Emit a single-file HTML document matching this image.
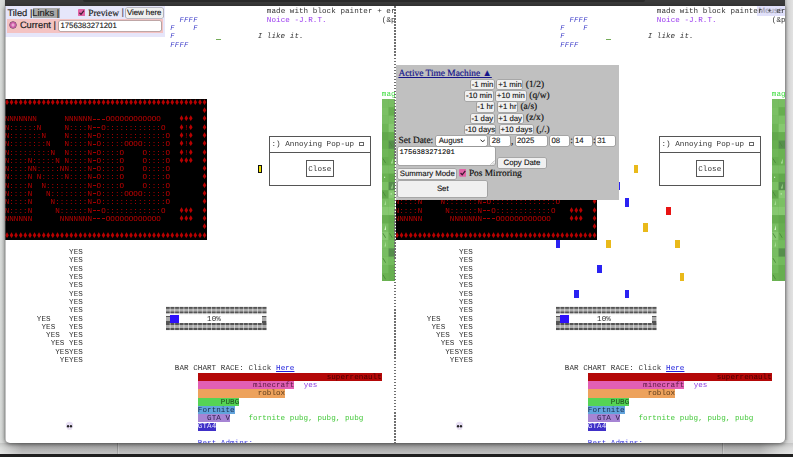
<!DOCTYPE html>
<html><head><meta charset="utf-8"><title>tiled</title>
<style>
html,body{margin:0;padding:0}
body{text-rendering:geometricPrecision;width:793px;height:457px;overflow:hidden;position:relative;background:#dcdedc;font-family:"Liberation Sans",sans-serif}
#top{position:absolute;left:5px;top:0;width:780px;height:6px;background:#3a3a3a}
#lstrip{position:absolute;left:0;top:0;width:6px;height:454px;background:linear-gradient(to right,#d9dcda 0,#d3d6d4 60%,#b4b6b4 100%)}
#rstrip{position:absolute;left:785px;top:0;width:8px;height:454px;background:linear-gradient(to right,#b4b4b4 0,#d4d4d4 35%,#e2e2e2 100%)}
#under{position:absolute;left:0;top:440px;width:793px;height:14px;background:linear-gradient(to right,#dcdedc 0,#cfd0cf 6px,#adadad 22px,#a9a9a9 50%,#adadad 760px,#cfd0cf 780px,#dddddd 100%)}
#under i{position:absolute;top:0;width:1px;height:14px;background:#8c8c8c;box-shadow:1px 0 0 rgba(255,255,255,.18)}
#under:after{content:'';position:absolute;left:0;top:3px;width:793px;height:11px;background:linear-gradient(to bottom,rgba(0,0,0,.10) 0,rgba(0,0,0,0) 45%,rgba(255,255,255,.28) 100%)}
#bot{position:absolute;left:0;top:453.5px;width:793px;height:4px;background:#1f1f1f}
#win{position:absolute;left:5px;top:6px;width:780px;height:437px;background:#fff;border-radius:0 0 5px 5px;overflow:hidden;box-shadow:0 1px 4px rgba(0,0,0,.55)}
.tile{position:absolute;top:0;height:437px;overflow:hidden;will-change:transform}
.t{position:absolute;white-space:pre;font:7.6px/8.3px "Liberation Mono",monospace;letter-spacing:0.0392px}
.b{position:absolute}
.s{position:absolute;white-space:pre;-webkit-text-stroke:.18px currentColor}
.btn{position:absolute;box-sizing:border-box;background:#f0f0f0;box-shadow:0 0 0 .6px #8e8e8e;border-radius:1.2px;font:7.8px "Liberation Sans",sans-serif;color:#111;text-align:center;white-space:pre;-webkit-text-stroke:.12px currentColor}
.inp{position:absolute;box-sizing:border-box;background:#fff;box-shadow:0 0 0 .6px #8a8a8a;border-radius:1.4px;font:7.8px "Liberation Sans",sans-serif;color:#111;text-align:left;white-space:pre;overflow:hidden;padding-left:1.4px;-webkit-text-stroke:.1px currentColor}
.ta{font:7.1px/8px "Liberation Mono",monospace;padding:2.2px 0 0 1.1px;color:#000}
#div{position:absolute;left:389.4px;top:0;width:1.4px;height:437px;background:repeating-linear-gradient(to bottom,#6e6e6e 0,#6e6e6e 1.5px,rgba(255,255,255,0) 1.5px,rgba(255,255,255,0) 3.03px)}
</style></head><body>
<div id="lstrip"></div><div id="rstrip"></div>
<div id="under"><i style="left:117px"></i><i style="left:722px"></i></div>
<div id="top"><div style="position:absolute;left:78px;top:0;width:562px;height:1.6px;background:#2a2a2a;border-radius:0 0 3px 3px"></div></div>
<div id="bot"></div>
<div id="win">
<div class="b" style="left:752px;top:0;width:28px;height:9.5px;background:#e1e1fb"></div>
<div class="s" style="left:753.5px;top:-1.4px;line-height:12px;font-size:8px;font-family:'Liberation Sans';color:#a2a2b2;">Mouse</div>
<div class="tile" style="left:0;width:389.7px">
<div class="t" style="left:261.85px;top:2.4px;color:#333;">made with block painter + eraser</div>
<div class="t" style="left:174.45px;top:10.7px;color:#3a3ac8;font-style:italic;font-size:7.2px;letter-spacing:0.279px">FFFF</div>
<div class="t" style="left:261.85px;top:10.7px;color:#9a3af0;">Noice -J.R.T.</div>
<div class="t" style="left:376.85px;top:10.7px;color:#333;">(&amp;pls</div>
<div class="t" style="left:165.25px;top:19.0px;color:#3a3ac8;font-style:italic;font-size:7.2px;letter-spacing:0.279px">F    F</div>
<div class="t" style="left:165.25px;top:27.3px;color:#3a3ac8;font-style:italic;font-size:7.2px;letter-spacing:0.279px">F</div>
<div class="b" style="left:211.25px;top:26.4px;width:4.6px;height:8.3px;background:none;"></div>
<div class="b" style="left:211.45px;top:32.8px;width:4.2px;height:1.2px;background:#74ac58"></div>
<div class="t" style="left:252.65px;top:27.3px;color:#333;font-style:italic">I like it.</div>
<div class="t" style="left:165.25px;top:35.6px;color:#3a3ac8;font-style:italic;font-size:7.2px;letter-spacing:0.279px">FFFF</div>
<div class="b" style="left:-0.35px;top:92.8px;width:202.4px;height:141.1px;background:#000;"></div>
<div class="t" style="left:-0.35px;top:93.7px;color:#bc0000;"></div>
<div class="t" style="left:-0.35px;top:93.7px;color:#b60000;transform:translateY(0.2px) scaleY(1.28);transform-origin:50% 50%">♦♦♦♦♦♦♦♦♦♦♦♦♦♦♦♦♦♦♦♦♦♦♦♦♦♦♦♦♦♦♦♦♦♦♦♦♦♦♦♦♦♦♦♦</div>
<div class="t" style="left:-0.35px;top:102.0px;color:#bc0000;"></div>
<div class="t" style="left:-0.35px;top:102.0px;color:#b60000;transform:translateY(0.2px) scaleY(1.28);transform-origin:50% 50%">                                           ♦</div>
<div class="t" style="left:-0.35px;top:110.3px;color:#bc0000;">NNNNNNN      NNNNNN   OOOOOOOOOOOO</div>
<div class="b" style="left:87.85px;top:112.6px;width:3px;height:1px;background:#a40000"></div>
<div class="b" style="left:92.45px;top:112.6px;width:3px;height:1px;background:#a40000"></div>
<div class="b" style="left:97.05px;top:112.6px;width:3px;height:1px;background:#a40000"></div>
<div class="t" style="left:-0.35px;top:110.3px;color:#b60000;transform:translateY(0.2px) scaleY(1.28);transform-origin:50% 50%">                                      ♦♦♦  ♦</div>
<div class="t" style="left:-0.35px;top:118.6px;color:#bc0000;">N::::::N     N::::N  O::::::::::::O    !</div>
<div class="b" style="left:87.85px;top:120.9px;width:3px;height:1px;background:#a40000"></div>
<div class="b" style="left:92.45px;top:120.9px;width:3px;height:1px;background:#a40000"></div>
<div class="t" style="left:-0.35px;top:118.6px;color:#b60000;transform:translateY(0.2px) scaleY(1.28);transform-origin:50% 50%">                                      ♦ ♦  ♦</div>
<div class="t" style="left:-0.35px;top:126.9px;color:#bc0000;">N:::::::N    N::::N O::::::::::::::O   !</div>
<div class="b" style="left:87.85px;top:129.2px;width:3px;height:1px;background:#a40000"></div>
<div class="t" style="left:-0.35px;top:126.9px;color:#b60000;transform:translateY(0.2px) scaleY(1.28);transform-origin:50% 50%">                                      ♦ ♦  ♦</div>
<div class="t" style="left:-0.35px;top:135.2px;color:#bc0000;">N::::::::N   N::::N O:::::OOOO:::::O   !</div>
<div class="b" style="left:87.85px;top:137.5px;width:3px;height:1px;background:#a40000"></div>
<div class="t" style="left:-0.35px;top:135.2px;color:#b60000;transform:translateY(0.2px) scaleY(1.28);transform-origin:50% 50%">                                      ♦ ♦  ♦</div>
<div class="t" style="left:-0.35px;top:143.5px;color:#bc0000;">N:::::::::N  N::::N O::::O    O::::O   !</div>
<div class="b" style="left:87.85px;top:145.8px;width:3px;height:1px;background:#a40000"></div>
<div class="t" style="left:-0.35px;top:143.5px;color:#b60000;transform:translateY(0.2px) scaleY(1.28);transform-origin:50% 50%">                                      ♦ ♦  ♦</div>
<div class="t" style="left:-0.35px;top:151.8px;color:#bc0000;">N::::N:::::N N::::N O::::O    O::::O</div>
<div class="b" style="left:87.85px;top:154.1px;width:3px;height:1px;background:#a40000"></div>
<div class="t" style="left:-0.35px;top:151.8px;color:#b60000;transform:translateY(0.2px) scaleY(1.28);transform-origin:50% 50%">                                      ♦♦♦  ♦</div>
<div class="t" style="left:-0.35px;top:160.1px;color:#bc0000;">N::::NN:::::NN::::N O::::O    O::::O</div>
<div class="b" style="left:87.85px;top:162.4px;width:3px;height:1px;background:#a40000"></div>
<div class="t" style="left:-0.35px;top:160.1px;color:#b60000;transform:translateY(0.2px) scaleY(1.28);transform-origin:50% 50%">                                           ♦</div>
<div class="t" style="left:-0.35px;top:168.4px;color:#bc0000;">N::::N N:::::N::::N O::::O    O::::O</div>
<div class="b" style="left:87.85px;top:170.7px;width:3px;height:1px;background:#a40000"></div>
<div class="t" style="left:-0.35px;top:168.4px;color:#b60000;transform:translateY(0.2px) scaleY(1.28);transform-origin:50% 50%">                                           ♦</div>
<div class="t" style="left:-0.35px;top:176.7px;color:#bc0000;">N::::N  N:::::::::N O::::O    O::::O</div>
<div class="b" style="left:87.85px;top:179.0px;width:3px;height:1px;background:#a40000"></div>
<div class="t" style="left:-0.35px;top:176.7px;color:#b60000;transform:translateY(0.2px) scaleY(1.28);transform-origin:50% 50%">                                           ♦</div>
<div class="t" style="left:-0.35px;top:185.0px;color:#bc0000;">N::::N   N::::::::N O:::::OOOO:::::O</div>
<div class="b" style="left:87.85px;top:187.3px;width:3px;height:1px;background:#a40000"></div>
<div class="t" style="left:-0.35px;top:185.0px;color:#b60000;transform:translateY(0.2px) scaleY(1.28);transform-origin:50% 50%">                                           ♦</div>
<div class="t" style="left:-0.35px;top:193.3px;color:#bc0000;">N::::N    N:::::::N O::::::::::::::O</div>
<div class="b" style="left:87.85px;top:195.6px;width:3px;height:1px;background:#a40000"></div>
<div class="t" style="left:-0.35px;top:193.3px;color:#b60000;transform:translateY(0.2px) scaleY(1.28);transform-origin:50% 50%">                                           ♦</div>
<div class="t" style="left:-0.35px;top:201.6px;color:#bc0000;">N::::N     N::::::N  O::::::::::::O</div>
<div class="b" style="left:87.85px;top:203.9px;width:3px;height:1px;background:#a40000"></div>
<div class="b" style="left:92.45px;top:203.9px;width:3px;height:1px;background:#a40000"></div>
<div class="t" style="left:-0.35px;top:201.6px;color:#b60000;transform:translateY(0.2px) scaleY(1.28);transform-origin:50% 50%">                                      ♦♦♦  ♦</div>
<div class="t" style="left:-0.35px;top:209.9px;color:#bc0000;">NNNNNN      NNNNNNN   OOOOOOOOOOOO</div>
<div class="b" style="left:87.85px;top:212.2px;width:3px;height:1px;background:#a40000"></div>
<div class="b" style="left:92.45px;top:212.2px;width:3px;height:1px;background:#a40000"></div>
<div class="b" style="left:97.05px;top:212.2px;width:3px;height:1px;background:#a40000"></div>
<div class="t" style="left:-0.35px;top:209.9px;color:#b60000;transform:translateY(0.2px) scaleY(1.28);transform-origin:50% 50%">                                      ♦♦♦  ♦</div>
<div class="t" style="left:-0.35px;top:218.2px;color:#bc0000;"></div>
<div class="t" style="left:-0.35px;top:218.2px;color:#b60000;transform:translateY(0.2px) scaleY(1.28);transform-origin:50% 50%">                                           ♦</div>
<div class="t" style="left:-0.35px;top:226.5px;color:#bc0000;"></div>
<div class="t" style="left:-0.35px;top:226.5px;color:#b60000;transform:translateY(0.2px) scaleY(1.28);transform-origin:50% 50%">♦♦♦♦♦♦♦♦♦♦♦♦♦♦♦♦♦♦♦♦♦♦♦♦♦♦♦♦♦♦♦♦♦♦♦♦♦♦♦♦♦♦♦♦</div>
<div class="t" style="left:376.85px;top:85.4px;color:#3ddc3d;">magic</div>
<svg class="b" style="left:377.25px;top:92.8px" width="14" height="182.0" viewBox="0 0 14 182.0"><rect width="100%" height="100%" fill="#6ab252"/><rect x="0.0" y="0.0" width="6.699999999999999" height="8.4" fill="#78bd62"/><rect x="6.6" y="0.0" width="6.699999999999999" height="8.4" fill="#78bd62"/><rect x="13.2" y="0.0" width="6.699999999999999" height="8.4" fill="#86c870"/><rect x="0.0" y="8.3" width="6.699999999999999" height="8.4" fill="#7bc064"/><rect x="6.6" y="8.3" width="6.699999999999999" height="8.4" fill="#67ae50"/><rect x="13.2" y="8.3" width="6.699999999999999" height="8.4" fill="#6fb658"/><rect x="0.0" y="16.6" width="6.699999999999999" height="8.4" fill="#78bd62"/><rect x="6.6" y="16.6" width="6.699999999999999" height="8.4" fill="#7bc064"/><rect x="13.2" y="16.6" width="6.699999999999999" height="8.4" fill="#568f4c"/><path d="M17.2 18.1 l-1.6 5 l1.6 0z" fill="#b6e6a6"/><rect x="0.0" y="24.9" width="6.699999999999999" height="8.4" fill="#6fb658"/><rect x="6.6" y="24.9" width="6.699999999999999" height="8.4" fill="#86c870"/><rect x="13.2" y="24.9" width="6.699999999999999" height="8.4" fill="#568f4c"/><path d="M17.2 26.4 l-1.6 5 l1.6 0z" fill="#cdf0c0"/><rect x="0.0" y="33.2" width="6.699999999999999" height="8.4" fill="#62a84c"/><rect x="6.6" y="33.2" width="6.699999999999999" height="8.4" fill="#67ae50"/><rect x="13.2" y="33.2" width="6.699999999999999" height="8.4" fill="#86c870"/><path d="M14.2 34.7 l2.6 4.5" stroke="#4a8a3a" stroke-width="0.9"/><rect x="0.0" y="41.5" width="6.699999999999999" height="8.4" fill="#67ae50"/><rect x="6.6" y="41.5" width="6.699999999999999" height="8.4" fill="#568f4c"/><path d="M7.6 43.0 l2.6 4.5" stroke="#4a8a3a" stroke-width="0.9"/><rect x="13.2" y="41.5" width="6.699999999999999" height="8.4" fill="#6fb658"/><rect x="0.0" y="49.8" width="6.699999999999999" height="8.4" fill="#6fb658"/><rect x="6.6" y="49.8" width="6.699999999999999" height="8.4" fill="#6ab252"/><rect x="13.2" y="49.8" width="6.699999999999999" height="8.4" fill="#86c870"/><rect x="0.0" y="58.1" width="6.699999999999999" height="8.4" fill="#67ae50"/><path d="M1.0 59.6 l2.6 4.5" stroke="#4a8a3a" stroke-width="0.9"/><rect x="6.6" y="58.1" width="6.699999999999999" height="8.4" fill="#6ab252"/><path d="M10.6 59.6 l-1.6 5 l1.6 0z" fill="#b6e6a6"/><rect x="13.2" y="58.1" width="6.699999999999999" height="8.4" fill="#568f4c"/><rect x="0.0" y="66.4" width="6.699999999999999" height="8.4" fill="#78bd62"/><rect x="6.6" y="66.4" width="6.699999999999999" height="8.4" fill="#78bd62"/><rect x="13.2" y="66.4" width="6.699999999999999" height="8.4" fill="#7bc064"/><rect x="0.0" y="74.7" width="6.699999999999999" height="8.4" fill="#6ab252"/><rect x="2.0" y="77.7" width="1.2" height="1.2" fill="#c8eebc"/><rect x="6.6" y="74.7" width="6.699999999999999" height="8.4" fill="#62a84c"/><rect x="13.2" y="74.7" width="6.699999999999999" height="8.4" fill="#62a84c"/><path d="M14.2 76.2 l2.6 4.5" stroke="#4a8a3a" stroke-width="0.9"/><rect x="0.0" y="83.0" width="6.699999999999999" height="8.4" fill="#7bc064"/><rect x="6.6" y="83.0" width="6.699999999999999" height="8.4" fill="#568f4c"/><path d="M10.6 84.5 l-1.6 5 l1.6 0z" fill="#a5dc92"/><rect x="13.2" y="83.0" width="6.699999999999999" height="8.4" fill="#568f4c"/><rect x="0.0" y="91.3" width="6.699999999999999" height="8.4" fill="#62a84c"/><path d="M1.0 92.8 l2.6 4.5" stroke="#4a8a3a" stroke-width="0.9"/><rect x="6.6" y="91.3" width="6.699999999999999" height="8.4" fill="#86c870"/><rect x="8.6" y="94.3" width="1.2" height="1.2" fill="#c8eebc"/><rect x="13.2" y="91.3" width="6.699999999999999" height="8.4" fill="#72ba5c"/><rect x="0.0" y="99.6" width="6.699999999999999" height="8.4" fill="#78bd62"/><path d="M4.0 101.1 l-1.6 5 l1.6 0z" fill="#a5dc92"/><rect x="6.6" y="99.6" width="6.699999999999999" height="8.4" fill="#7bc064"/><rect x="13.2" y="99.6" width="6.699999999999999" height="8.4" fill="#86c870"/><rect x="15.2" y="102.6" width="1.2" height="1.2" fill="#c8eebc"/><rect x="0.0" y="107.9" width="6.699999999999999" height="8.4" fill="#86c870"/><rect x="6.6" y="107.9" width="6.699999999999999" height="8.4" fill="#86c870"/><rect x="13.2" y="107.9" width="6.699999999999999" height="8.4" fill="#78bd62"/><rect x="0.0" y="116.2" width="6.699999999999999" height="8.4" fill="#67ae50"/><rect x="6.6" y="116.2" width="6.699999999999999" height="8.4" fill="#62a84c"/><rect x="13.2" y="116.2" width="6.699999999999999" height="8.4" fill="#62a84c"/><rect x="0.0" y="124.5" width="6.699999999999999" height="8.4" fill="#78bd62"/><path d="M4.0 126.0 l-1.6 5 l1.6 0z" fill="#cdf0c0"/><rect x="6.6" y="124.5" width="6.699999999999999" height="8.4" fill="#67ae50"/><rect x="13.2" y="124.5" width="6.699999999999999" height="8.4" fill="#67ae50"/><rect x="0.0" y="132.8" width="6.699999999999999" height="8.4" fill="#86c870"/><path d="M1.0 134.3 l2.6 4.5" stroke="#4a8a3a" stroke-width="0.9"/><rect x="6.6" y="132.8" width="6.699999999999999" height="8.4" fill="#6ab252"/><path d="M7.6 134.3 l2.6 4.5" stroke="#4a8a3a" stroke-width="0.9"/><rect x="13.2" y="132.8" width="6.699999999999999" height="8.4" fill="#7bc064"/><rect x="0.0" y="141.1" width="6.699999999999999" height="8.4" fill="#7bc064"/><path d="M4.0 142.6 l-1.6 5 l1.6 0z" fill="#a5dc92"/><rect x="6.6" y="141.1" width="6.699999999999999" height="8.4" fill="#72ba5c"/><rect x="13.2" y="141.1" width="6.699999999999999" height="8.4" fill="#7bc064"/><rect x="0.0" y="149.4" width="6.699999999999999" height="8.4" fill="#78bd62"/><rect x="6.6" y="149.4" width="6.699999999999999" height="8.4" fill="#568f4c"/><rect x="13.2" y="149.4" width="6.699999999999999" height="8.4" fill="#568f4c"/><rect x="0.0" y="157.7" width="6.699999999999999" height="8.4" fill="#7bc064"/><path d="M1.0 159.2 l2.6 4.5" stroke="#4a8a3a" stroke-width="0.9"/><rect x="6.6" y="157.7" width="6.699999999999999" height="8.4" fill="#72ba5c"/><rect x="13.2" y="157.7" width="6.699999999999999" height="8.4" fill="#7bc064"/><rect x="0.0" y="166.0" width="6.699999999999999" height="8.4" fill="#72ba5c"/><rect x="6.6" y="166.0" width="6.699999999999999" height="8.4" fill="#67ae50"/><rect x="13.2" y="166.0" width="6.699999999999999" height="8.4" fill="#6fb658"/><rect x="0.0" y="174.3" width="6.699999999999999" height="8.4" fill="#6ab252"/><path d="M1.0 175.8 l2.6 4.5" stroke="#4a8a3a" stroke-width="0.9"/><rect x="6.6" y="174.3" width="6.699999999999999" height="8.4" fill="#67ae50"/><rect x="13.2" y="174.3" width="6.699999999999999" height="8.4" fill="#62a84c"/></svg>
<div class="b" style="left:264.15px;top:129.65px;width:102.2px;height:50.3px;border:1px solid #555;box-sizing:border-box"></div>
<div class="b" style="left:264.15px;top:145.95px;width:102.2px;height:1px;background:#555"></div>
<div class="b" style="left:300.65px;top:154.25px;width:28.3px;height:17.1px;border:1px solid #555;box-sizing:border-box"></div>
<div class="t" style="left:266.45px;top:135.2px;color:#333;">:) Annoying Pop-up</div>
<div class="b" style="left:354.15000000000003px;top:135.70000000000002px;width:4.8px;height:4.6px;border:1px solid #666;box-sizing:border-box"></div>
<div class="t" style="left:303.25px;top:160.1px;color:#333;">Close</div>
<div class="t" style="left:64.05px;top:243.1px;color:#333;">YES</div>
<div class="t" style="left:64.05px;top:251.4px;color:#333;">YES</div>
<div class="t" style="left:64.05px;top:259.7px;color:#333;">YES</div>
<div class="t" style="left:64.05px;top:268.0px;color:#333;">YES</div>
<div class="t" style="left:64.05px;top:276.3px;color:#333;">YES</div>
<div class="t" style="left:64.05px;top:284.6px;color:#333;">YES</div>
<div class="t" style="left:64.05px;top:292.9px;color:#333;">YES</div>
<div class="t" style="left:64.05px;top:301.2px;color:#333;">YES</div>
<div class="t" style="left:31.85px;top:309.5px;color:#333;">YES    YES</div>
<div class="t" style="left:36.45px;top:317.8px;color:#333;">YES   YES</div>
<div class="t" style="left:41.05px;top:326.1px;color:#333;">YES  YES</div>
<div class="t" style="left:45.65px;top:334.4px;color:#333;">YES YES</div>
<div class="t" style="left:50.25px;top:342.7px;color:#333;">YESYES</div>
<div class="t" style="left:54.85px;top:351.0px;color:#333;">YEYES</div>
<div class="b" style="left:160.65px;top:300.3px;width:101.2px;height:8.3px;background:linear-gradient(to right, rgba(255,255,255,0) 0, rgba(255,255,255,0) 3.9px, rgba(255,255,255,.55) 3.9px, rgba(255,255,255,.55) 4.6px) 0 0/4.6px 8.3px,linear-gradient(to bottom,#f4f4f4 0,#f4f4f4 .5px,#545454 .5px,#545454 2.4px,#acacac 2.4px,#acacac 5.6px,#545454 5.6px,#545454 7.7px,#f4f4f4 7.7px,#f4f4f4 8.3px) 0 0/4.6px 8.3px;"></div>
<div class="b" style="left:160.65px;top:316.9px;width:101.2px;height:8.3px;background:linear-gradient(to right, rgba(255,255,255,0) 0, rgba(255,255,255,0) 3.9px, rgba(255,255,255,.55) 3.9px, rgba(255,255,255,.55) 4.6px) 0 0/4.6px 8.3px,linear-gradient(to bottom,#f4f4f4 0,#f4f4f4 .5px,#545454 .5px,#545454 2.4px,#acacac 2.4px,#acacac 5.6px,#545454 5.6px,#545454 7.7px,#f4f4f4 7.7px,#f4f4f4 8.3px) 0 0/4.6px 8.3px;"></div>
<div class="b" style="left:160.65px;top:308.6px;width:4.6px;height:8.3px;background:linear-gradient(to right, rgba(255,255,255,0) 0, rgba(255,255,255,0) 3.9px, rgba(255,255,255,.55) 3.9px, rgba(255,255,255,.55) 4.6px) 0 0/4.6px 8.3px,linear-gradient(to bottom,#f4f4f4 0,#f4f4f4 .5px,#545454 .5px,#545454 2.4px,#acacac 2.4px,#acacac 5.6px,#545454 5.6px,#545454 7.7px,#f4f4f4 7.7px,#f4f4f4 8.3px) 0 0/4.6px 8.3px;"></div>
<div class="b" style="left:257.25px;top:308.6px;width:4.6px;height:8.3px;background:linear-gradient(to right, rgba(255,255,255,0) 0, rgba(255,255,255,0) 3.9px, rgba(255,255,255,.55) 3.9px, rgba(255,255,255,.55) 4.6px) 0 0/4.6px 8.3px,linear-gradient(to bottom,#f4f4f4 0,#f4f4f4 .5px,#545454 .5px,#545454 2.4px,#acacac 2.4px,#acacac 5.6px,#545454 5.6px,#545454 7.7px,#f4f4f4 7.7px,#f4f4f4 8.3px) 0 0/4.6px 8.3px;"></div>
<div class="b" style="left:165.25px;top:308.6px;width:9.2px;height:8.3px;background:#2c10fa;"></div>
<div class="t" style="left:202.05px;top:309.5px;color:#333;">10%</div>
<div class="t" style="left:169.85px;top:359.3px;color:#333;">BAR CHART RACE: Click </div>
<div class="t" style="left:271.05px;top:359.3px;color:#2222dd;text-decoration:underline">Here</div>
<div class="b" style="left:192.85px;top:366.7px;width:184.0px;height:8.3px;background:#b40808;"></div>
<div class="t" style="left:321.65px;top:367.6px;color:#480000;">superrenault</div>
<div class="b" style="left:192.85px;top:375.0px;width:96.6px;height:8.3px;background:#e25fb4;"></div>
<div class="t" style="left:248.05px;top:375.9px;color:#5a1a44;">minecraft</div>
<div class="t" style="left:298.65px;top:375.9px;color:#8a3ae0;">yes</div>
<div class="b" style="left:192.85px;top:383.3px;width:87.4px;height:8.3px;background:#eda25c;"></div>
<div class="t" style="left:252.65px;top:384.2px;color:#5a3a1a;">roblox</div>
<div class="b" style="left:192.85px;top:391.6px;width:41.4px;height:8.3px;background:#55d455;"></div>
<div class="t" style="left:215.85px;top:392.5px;color:#1a4a1a;">PUBG</div>
<div class="b" style="left:192.85px;top:399.9px;width:36.8px;height:8.3px;background:#62a4dc;"></div>
<div class="t" style="left:192.85px;top:400.8px;color:#1a2a4a;">Fortnite</div>
<div class="b" style="left:192.85px;top:408.2px;width:32.2px;height:8.3px;background:#a684d4;"></div>
<div class="t" style="left:202.05px;top:409.1px;color:#2a1a4a;">GTA V</div>
<div class="t" style="left:243.45px;top:409.1px;color:#44c83a;">fortnite pubg, pubg, pubg</div>
<div class="b" style="left:192.85px;top:416.5px;width:18.4px;height:8.3px;background:#4030c8;"></div>
<div class="t" style="left:192.85px;top:417.4px;color:#e8e8ff;">GTA4</div>
<div class="t" style="left:192.85px;top:434.0px;color:#3a3ae0;">Best Admins:</div>
<svg class="b" style="left:59.8px;top:414.6px" width="9" height="10.1" viewBox="0 0 8 9"><ellipse cx="4" cy="4" rx="3.3" ry="3.4" fill="#e6def3"/><rect x="2.3" y="6" width="3.6" height="1.8" fill="#e8e0f0"/><ellipse cx="2.7" cy="4.6" rx="1" ry="1.1" fill="#222"/><ellipse cx="5.3" cy="4.6" rx="1" ry="1.1" fill="#222"/></svg>
<div class="b" style="left:252.65px;top:159.2px;width:4.6px;height:8.3px;background:#f0e000;border:1px solid #111;box-sizing:border-box"></div>
</div>
<div class="tile" style="left:390px;width:390px"><div class="b" style="left:0;top:0;width:0.6px;height:437px;background:#fff;z-index:5"></div>
<div class="t" style="left:261.85px;top:2.4px;color:#333;">made with block painter + eraser</div>
<div class="t" style="left:174.45px;top:10.7px;color:#3a3ac8;font-style:italic;font-size:7.2px;letter-spacing:0.279px">FFFF</div>
<div class="t" style="left:261.85px;top:10.7px;color:#9a3af0;">Noice -J.R.T.</div>
<div class="t" style="left:376.85px;top:10.7px;color:#333;">(&amp;pls</div>
<div class="t" style="left:165.25px;top:19.0px;color:#3a3ac8;font-style:italic;font-size:7.2px;letter-spacing:0.279px">F    F</div>
<div class="t" style="left:165.25px;top:27.3px;color:#3a3ac8;font-style:italic;font-size:7.2px;letter-spacing:0.279px">F</div>
<div class="b" style="left:211.25px;top:26.4px;width:4.6px;height:8.3px;background:none;"></div>
<div class="b" style="left:211.45px;top:32.8px;width:4.2px;height:1.2px;background:#74ac58"></div>
<div class="t" style="left:252.65px;top:27.3px;color:#333;font-style:italic">I like it.</div>
<div class="t" style="left:165.25px;top:35.6px;color:#3a3ac8;font-style:italic;font-size:7.2px;letter-spacing:0.279px">FFFF</div>
<div class="b" style="left:-0.35px;top:92.8px;width:202.4px;height:141.1px;background:#000;"></div>
<div class="t" style="left:-0.35px;top:93.7px;color:#bc0000;"></div>
<div class="t" style="left:-0.35px;top:93.7px;color:#b60000;transform:translateY(0.2px) scaleY(1.28);transform-origin:50% 50%">♦♦♦♦♦♦♦♦♦♦♦♦♦♦♦♦♦♦♦♦♦♦♦♦♦♦♦♦♦♦♦♦♦♦♦♦♦♦♦♦♦♦♦♦</div>
<div class="t" style="left:-0.35px;top:102.0px;color:#bc0000;"></div>
<div class="t" style="left:-0.35px;top:102.0px;color:#b60000;transform:translateY(0.2px) scaleY(1.28);transform-origin:50% 50%">                                           ♦</div>
<div class="t" style="left:-0.35px;top:110.3px;color:#bc0000;">NNNNNNN      NNNNNN   OOOOOOOOOOOO</div>
<div class="b" style="left:87.85px;top:112.6px;width:3px;height:1px;background:#a40000"></div>
<div class="b" style="left:92.45px;top:112.6px;width:3px;height:1px;background:#a40000"></div>
<div class="b" style="left:97.05px;top:112.6px;width:3px;height:1px;background:#a40000"></div>
<div class="t" style="left:-0.35px;top:110.3px;color:#b60000;transform:translateY(0.2px) scaleY(1.28);transform-origin:50% 50%">                                      ♦♦♦  ♦</div>
<div class="t" style="left:-0.35px;top:118.6px;color:#bc0000;">N::::::N     N::::N  O::::::::::::O    !</div>
<div class="b" style="left:87.85px;top:120.9px;width:3px;height:1px;background:#a40000"></div>
<div class="b" style="left:92.45px;top:120.9px;width:3px;height:1px;background:#a40000"></div>
<div class="t" style="left:-0.35px;top:118.6px;color:#b60000;transform:translateY(0.2px) scaleY(1.28);transform-origin:50% 50%">                                      ♦ ♦  ♦</div>
<div class="t" style="left:-0.35px;top:126.9px;color:#bc0000;">N:::::::N    N::::N O::::::::::::::O   !</div>
<div class="b" style="left:87.85px;top:129.2px;width:3px;height:1px;background:#a40000"></div>
<div class="t" style="left:-0.35px;top:126.9px;color:#b60000;transform:translateY(0.2px) scaleY(1.28);transform-origin:50% 50%">                                      ♦ ♦  ♦</div>
<div class="t" style="left:-0.35px;top:135.2px;color:#bc0000;">N::::::::N   N::::N O:::::OOOO:::::O   !</div>
<div class="b" style="left:87.85px;top:137.5px;width:3px;height:1px;background:#a40000"></div>
<div class="t" style="left:-0.35px;top:135.2px;color:#b60000;transform:translateY(0.2px) scaleY(1.28);transform-origin:50% 50%">                                      ♦ ♦  ♦</div>
<div class="t" style="left:-0.35px;top:143.5px;color:#bc0000;">N:::::::::N  N::::N O::::O    O::::O   !</div>
<div class="b" style="left:87.85px;top:145.8px;width:3px;height:1px;background:#a40000"></div>
<div class="t" style="left:-0.35px;top:143.5px;color:#b60000;transform:translateY(0.2px) scaleY(1.28);transform-origin:50% 50%">                                      ♦ ♦  ♦</div>
<div class="t" style="left:-0.35px;top:151.8px;color:#bc0000;">N::::N:::::N N::::N O::::O    O::::O</div>
<div class="b" style="left:87.85px;top:154.1px;width:3px;height:1px;background:#a40000"></div>
<div class="t" style="left:-0.35px;top:151.8px;color:#b60000;transform:translateY(0.2px) scaleY(1.28);transform-origin:50% 50%">                                      ♦♦♦  ♦</div>
<div class="t" style="left:-0.35px;top:160.1px;color:#bc0000;">N::::NN:::::NN::::N O::::O    O::::O</div>
<div class="b" style="left:87.85px;top:162.4px;width:3px;height:1px;background:#a40000"></div>
<div class="t" style="left:-0.35px;top:160.1px;color:#b60000;transform:translateY(0.2px) scaleY(1.28);transform-origin:50% 50%">                                           ♦</div>
<div class="t" style="left:-0.35px;top:168.4px;color:#bc0000;">N::::N N:::::N::::N O::::O    O::::O</div>
<div class="b" style="left:87.85px;top:170.7px;width:3px;height:1px;background:#a40000"></div>
<div class="t" style="left:-0.35px;top:168.4px;color:#b60000;transform:translateY(0.2px) scaleY(1.28);transform-origin:50% 50%">                                           ♦</div>
<div class="t" style="left:-0.35px;top:176.7px;color:#bc0000;">N::::N  N:::::::::N O::::O    O::::O</div>
<div class="b" style="left:87.85px;top:179.0px;width:3px;height:1px;background:#a40000"></div>
<div class="t" style="left:-0.35px;top:176.7px;color:#b60000;transform:translateY(0.2px) scaleY(1.28);transform-origin:50% 50%">                                           ♦</div>
<div class="t" style="left:-0.35px;top:185.0px;color:#bc0000;">N::::N   N::::::::N O:::::OOOO:::::O</div>
<div class="b" style="left:87.85px;top:187.3px;width:3px;height:1px;background:#a40000"></div>
<div class="t" style="left:-0.35px;top:185.0px;color:#b60000;transform:translateY(0.2px) scaleY(1.28);transform-origin:50% 50%">                                           ♦</div>
<div class="t" style="left:-0.35px;top:193.3px;color:#bc0000;">N::::N    N:::::::N O::::::::::::::O</div>
<div class="b" style="left:87.85px;top:195.6px;width:3px;height:1px;background:#a40000"></div>
<div class="t" style="left:-0.35px;top:193.3px;color:#b60000;transform:translateY(0.2px) scaleY(1.28);transform-origin:50% 50%">                                           ♦</div>
<div class="t" style="left:-0.35px;top:201.6px;color:#bc0000;">N::::N     N::::::N  O::::::::::::O</div>
<div class="b" style="left:87.85px;top:203.9px;width:3px;height:1px;background:#a40000"></div>
<div class="b" style="left:92.45px;top:203.9px;width:3px;height:1px;background:#a40000"></div>
<div class="t" style="left:-0.35px;top:201.6px;color:#b60000;transform:translateY(0.2px) scaleY(1.28);transform-origin:50% 50%">                                      ♦♦♦  ♦</div>
<div class="t" style="left:-0.35px;top:209.9px;color:#bc0000;">NNNNNN      NNNNNNN   OOOOOOOOOOOO</div>
<div class="b" style="left:87.85px;top:212.2px;width:3px;height:1px;background:#a40000"></div>
<div class="b" style="left:92.45px;top:212.2px;width:3px;height:1px;background:#a40000"></div>
<div class="b" style="left:97.05px;top:212.2px;width:3px;height:1px;background:#a40000"></div>
<div class="t" style="left:-0.35px;top:209.9px;color:#b60000;transform:translateY(0.2px) scaleY(1.28);transform-origin:50% 50%">                                      ♦♦♦  ♦</div>
<div class="t" style="left:-0.35px;top:218.2px;color:#bc0000;"></div>
<div class="t" style="left:-0.35px;top:218.2px;color:#b60000;transform:translateY(0.2px) scaleY(1.28);transform-origin:50% 50%">                                           ♦</div>
<div class="t" style="left:-0.35px;top:226.5px;color:#bc0000;"></div>
<div class="t" style="left:-0.35px;top:226.5px;color:#b60000;transform:translateY(0.2px) scaleY(1.28);transform-origin:50% 50%">♦♦♦♦♦♦♦♦♦♦♦♦♦♦♦♦♦♦♦♦♦♦♦♦♦♦♦♦♦♦♦♦♦♦♦♦♦♦♦♦♦♦♦♦</div>
<div class="t" style="left:376.85px;top:85.4px;color:#3ddc3d;">magic</div>
<svg class="b" style="left:377.25px;top:92.8px" width="14" height="182.0" viewBox="0 0 14 182.0"><rect width="100%" height="100%" fill="#6ab252"/><rect x="0.0" y="0.0" width="6.699999999999999" height="8.4" fill="#78bd62"/><rect x="6.6" y="0.0" width="6.699999999999999" height="8.4" fill="#78bd62"/><rect x="13.2" y="0.0" width="6.699999999999999" height="8.4" fill="#86c870"/><rect x="0.0" y="8.3" width="6.699999999999999" height="8.4" fill="#7bc064"/><rect x="6.6" y="8.3" width="6.699999999999999" height="8.4" fill="#67ae50"/><rect x="13.2" y="8.3" width="6.699999999999999" height="8.4" fill="#6fb658"/><rect x="0.0" y="16.6" width="6.699999999999999" height="8.4" fill="#78bd62"/><rect x="6.6" y="16.6" width="6.699999999999999" height="8.4" fill="#7bc064"/><rect x="13.2" y="16.6" width="6.699999999999999" height="8.4" fill="#568f4c"/><path d="M17.2 18.1 l-1.6 5 l1.6 0z" fill="#b6e6a6"/><rect x="0.0" y="24.9" width="6.699999999999999" height="8.4" fill="#6fb658"/><rect x="6.6" y="24.9" width="6.699999999999999" height="8.4" fill="#86c870"/><rect x="13.2" y="24.9" width="6.699999999999999" height="8.4" fill="#568f4c"/><path d="M17.2 26.4 l-1.6 5 l1.6 0z" fill="#cdf0c0"/><rect x="0.0" y="33.2" width="6.699999999999999" height="8.4" fill="#62a84c"/><rect x="6.6" y="33.2" width="6.699999999999999" height="8.4" fill="#67ae50"/><rect x="13.2" y="33.2" width="6.699999999999999" height="8.4" fill="#86c870"/><path d="M14.2 34.7 l2.6 4.5" stroke="#4a8a3a" stroke-width="0.9"/><rect x="0.0" y="41.5" width="6.699999999999999" height="8.4" fill="#67ae50"/><rect x="6.6" y="41.5" width="6.699999999999999" height="8.4" fill="#568f4c"/><path d="M7.6 43.0 l2.6 4.5" stroke="#4a8a3a" stroke-width="0.9"/><rect x="13.2" y="41.5" width="6.699999999999999" height="8.4" fill="#6fb658"/><rect x="0.0" y="49.8" width="6.699999999999999" height="8.4" fill="#6fb658"/><rect x="6.6" y="49.8" width="6.699999999999999" height="8.4" fill="#6ab252"/><rect x="13.2" y="49.8" width="6.699999999999999" height="8.4" fill="#86c870"/><rect x="0.0" y="58.1" width="6.699999999999999" height="8.4" fill="#67ae50"/><path d="M1.0 59.6 l2.6 4.5" stroke="#4a8a3a" stroke-width="0.9"/><rect x="6.6" y="58.1" width="6.699999999999999" height="8.4" fill="#6ab252"/><path d="M10.6 59.6 l-1.6 5 l1.6 0z" fill="#b6e6a6"/><rect x="13.2" y="58.1" width="6.699999999999999" height="8.4" fill="#568f4c"/><rect x="0.0" y="66.4" width="6.699999999999999" height="8.4" fill="#78bd62"/><rect x="6.6" y="66.4" width="6.699999999999999" height="8.4" fill="#78bd62"/><rect x="13.2" y="66.4" width="6.699999999999999" height="8.4" fill="#7bc064"/><rect x="0.0" y="74.7" width="6.699999999999999" height="8.4" fill="#6ab252"/><rect x="2.0" y="77.7" width="1.2" height="1.2" fill="#c8eebc"/><rect x="6.6" y="74.7" width="6.699999999999999" height="8.4" fill="#62a84c"/><rect x="13.2" y="74.7" width="6.699999999999999" height="8.4" fill="#62a84c"/><path d="M14.2 76.2 l2.6 4.5" stroke="#4a8a3a" stroke-width="0.9"/><rect x="0.0" y="83.0" width="6.699999999999999" height="8.4" fill="#7bc064"/><rect x="6.6" y="83.0" width="6.699999999999999" height="8.4" fill="#568f4c"/><path d="M10.6 84.5 l-1.6 5 l1.6 0z" fill="#a5dc92"/><rect x="13.2" y="83.0" width="6.699999999999999" height="8.4" fill="#568f4c"/><rect x="0.0" y="91.3" width="6.699999999999999" height="8.4" fill="#62a84c"/><path d="M1.0 92.8 l2.6 4.5" stroke="#4a8a3a" stroke-width="0.9"/><rect x="6.6" y="91.3" width="6.699999999999999" height="8.4" fill="#86c870"/><rect x="8.6" y="94.3" width="1.2" height="1.2" fill="#c8eebc"/><rect x="13.2" y="91.3" width="6.699999999999999" height="8.4" fill="#72ba5c"/><rect x="0.0" y="99.6" width="6.699999999999999" height="8.4" fill="#78bd62"/><path d="M4.0 101.1 l-1.6 5 l1.6 0z" fill="#a5dc92"/><rect x="6.6" y="99.6" width="6.699999999999999" height="8.4" fill="#7bc064"/><rect x="13.2" y="99.6" width="6.699999999999999" height="8.4" fill="#86c870"/><rect x="15.2" y="102.6" width="1.2" height="1.2" fill="#c8eebc"/><rect x="0.0" y="107.9" width="6.699999999999999" height="8.4" fill="#86c870"/><rect x="6.6" y="107.9" width="6.699999999999999" height="8.4" fill="#86c870"/><rect x="13.2" y="107.9" width="6.699999999999999" height="8.4" fill="#78bd62"/><rect x="0.0" y="116.2" width="6.699999999999999" height="8.4" fill="#67ae50"/><rect x="6.6" y="116.2" width="6.699999999999999" height="8.4" fill="#62a84c"/><rect x="13.2" y="116.2" width="6.699999999999999" height="8.4" fill="#62a84c"/><rect x="0.0" y="124.5" width="6.699999999999999" height="8.4" fill="#78bd62"/><path d="M4.0 126.0 l-1.6 5 l1.6 0z" fill="#cdf0c0"/><rect x="6.6" y="124.5" width="6.699999999999999" height="8.4" fill="#67ae50"/><rect x="13.2" y="124.5" width="6.699999999999999" height="8.4" fill="#67ae50"/><rect x="0.0" y="132.8" width="6.699999999999999" height="8.4" fill="#86c870"/><path d="M1.0 134.3 l2.6 4.5" stroke="#4a8a3a" stroke-width="0.9"/><rect x="6.6" y="132.8" width="6.699999999999999" height="8.4" fill="#6ab252"/><path d="M7.6 134.3 l2.6 4.5" stroke="#4a8a3a" stroke-width="0.9"/><rect x="13.2" y="132.8" width="6.699999999999999" height="8.4" fill="#7bc064"/><rect x="0.0" y="141.1" width="6.699999999999999" height="8.4" fill="#7bc064"/><path d="M4.0 142.6 l-1.6 5 l1.6 0z" fill="#a5dc92"/><rect x="6.6" y="141.1" width="6.699999999999999" height="8.4" fill="#72ba5c"/><rect x="13.2" y="141.1" width="6.699999999999999" height="8.4" fill="#7bc064"/><rect x="0.0" y="149.4" width="6.699999999999999" height="8.4" fill="#78bd62"/><rect x="6.6" y="149.4" width="6.699999999999999" height="8.4" fill="#568f4c"/><rect x="13.2" y="149.4" width="6.699999999999999" height="8.4" fill="#568f4c"/><rect x="0.0" y="157.7" width="6.699999999999999" height="8.4" fill="#7bc064"/><path d="M1.0 159.2 l2.6 4.5" stroke="#4a8a3a" stroke-width="0.9"/><rect x="6.6" y="157.7" width="6.699999999999999" height="8.4" fill="#72ba5c"/><rect x="13.2" y="157.7" width="6.699999999999999" height="8.4" fill="#7bc064"/><rect x="0.0" y="166.0" width="6.699999999999999" height="8.4" fill="#72ba5c"/><rect x="6.6" y="166.0" width="6.699999999999999" height="8.4" fill="#67ae50"/><rect x="13.2" y="166.0" width="6.699999999999999" height="8.4" fill="#6fb658"/><rect x="0.0" y="174.3" width="6.699999999999999" height="8.4" fill="#6ab252"/><path d="M1.0 175.8 l2.6 4.5" stroke="#4a8a3a" stroke-width="0.9"/><rect x="6.6" y="174.3" width="6.699999999999999" height="8.4" fill="#67ae50"/><rect x="13.2" y="174.3" width="6.699999999999999" height="8.4" fill="#62a84c"/></svg>
<div class="b" style="left:264.15px;top:129.65px;width:102.2px;height:50.3px;border:1px solid #555;box-sizing:border-box"></div>
<div class="b" style="left:264.15px;top:145.95px;width:102.2px;height:1px;background:#555"></div>
<div class="b" style="left:300.65px;top:154.25px;width:28.3px;height:17.1px;border:1px solid #555;box-sizing:border-box"></div>
<div class="t" style="left:266.45px;top:135.2px;color:#333;">:) Annoying Pop-up</div>
<div class="b" style="left:354.15000000000003px;top:135.70000000000002px;width:4.8px;height:4.6px;border:1px solid #666;box-sizing:border-box"></div>
<div class="t" style="left:303.25px;top:160.1px;color:#333;">Close</div>
<div class="t" style="left:64.05px;top:243.1px;color:#333;">YES</div>
<div class="t" style="left:64.05px;top:251.4px;color:#333;">YES</div>
<div class="t" style="left:64.05px;top:259.7px;color:#333;">YES</div>
<div class="t" style="left:64.05px;top:268.0px;color:#333;">YES</div>
<div class="t" style="left:64.05px;top:276.3px;color:#333;">YES</div>
<div class="t" style="left:64.05px;top:284.6px;color:#333;">YES</div>
<div class="t" style="left:64.05px;top:292.9px;color:#333;">YES</div>
<div class="t" style="left:64.05px;top:301.2px;color:#333;">YES</div>
<div class="t" style="left:31.85px;top:309.5px;color:#333;">YES    YES</div>
<div class="t" style="left:36.45px;top:317.8px;color:#333;">YES   YES</div>
<div class="t" style="left:41.05px;top:326.1px;color:#333;">YES  YES</div>
<div class="t" style="left:45.65px;top:334.4px;color:#333;">YES YES</div>
<div class="t" style="left:50.25px;top:342.7px;color:#333;">YESYES</div>
<div class="t" style="left:54.85px;top:351.0px;color:#333;">YEYES</div>
<div class="b" style="left:160.65px;top:300.3px;width:101.2px;height:8.3px;background:linear-gradient(to right, rgba(255,255,255,0) 0, rgba(255,255,255,0) 3.9px, rgba(255,255,255,.55) 3.9px, rgba(255,255,255,.55) 4.6px) 0 0/4.6px 8.3px,linear-gradient(to bottom,#f4f4f4 0,#f4f4f4 .5px,#545454 .5px,#545454 2.4px,#acacac 2.4px,#acacac 5.6px,#545454 5.6px,#545454 7.7px,#f4f4f4 7.7px,#f4f4f4 8.3px) 0 0/4.6px 8.3px;"></div>
<div class="b" style="left:160.65px;top:316.9px;width:101.2px;height:8.3px;background:linear-gradient(to right, rgba(255,255,255,0) 0, rgba(255,255,255,0) 3.9px, rgba(255,255,255,.55) 3.9px, rgba(255,255,255,.55) 4.6px) 0 0/4.6px 8.3px,linear-gradient(to bottom,#f4f4f4 0,#f4f4f4 .5px,#545454 .5px,#545454 2.4px,#acacac 2.4px,#acacac 5.6px,#545454 5.6px,#545454 7.7px,#f4f4f4 7.7px,#f4f4f4 8.3px) 0 0/4.6px 8.3px;"></div>
<div class="b" style="left:160.65px;top:308.6px;width:4.6px;height:8.3px;background:linear-gradient(to right, rgba(255,255,255,0) 0, rgba(255,255,255,0) 3.9px, rgba(255,255,255,.55) 3.9px, rgba(255,255,255,.55) 4.6px) 0 0/4.6px 8.3px,linear-gradient(to bottom,#f4f4f4 0,#f4f4f4 .5px,#545454 .5px,#545454 2.4px,#acacac 2.4px,#acacac 5.6px,#545454 5.6px,#545454 7.7px,#f4f4f4 7.7px,#f4f4f4 8.3px) 0 0/4.6px 8.3px;"></div>
<div class="b" style="left:257.25px;top:308.6px;width:4.6px;height:8.3px;background:linear-gradient(to right, rgba(255,255,255,0) 0, rgba(255,255,255,0) 3.9px, rgba(255,255,255,.55) 3.9px, rgba(255,255,255,.55) 4.6px) 0 0/4.6px 8.3px,linear-gradient(to bottom,#f4f4f4 0,#f4f4f4 .5px,#545454 .5px,#545454 2.4px,#acacac 2.4px,#acacac 5.6px,#545454 5.6px,#545454 7.7px,#f4f4f4 7.7px,#f4f4f4 8.3px) 0 0/4.6px 8.3px;"></div>
<div class="b" style="left:165.25px;top:308.6px;width:9.2px;height:8.3px;background:#2c10fa;"></div>
<div class="t" style="left:202.05px;top:309.5px;color:#333;">10%</div>
<div class="t" style="left:169.85px;top:359.3px;color:#333;">BAR CHART RACE: Click </div>
<div class="t" style="left:271.05px;top:359.3px;color:#2222dd;text-decoration:underline">Here</div>
<div class="b" style="left:192.85px;top:366.7px;width:184.0px;height:8.3px;background:#b40808;"></div>
<div class="t" style="left:321.65px;top:367.6px;color:#480000;">superrenault</div>
<div class="b" style="left:192.85px;top:375.0px;width:96.6px;height:8.3px;background:#e25fb4;"></div>
<div class="t" style="left:248.05px;top:375.9px;color:#5a1a44;">minecraft</div>
<div class="t" style="left:298.65px;top:375.9px;color:#8a3ae0;">yes</div>
<div class="b" style="left:192.85px;top:383.3px;width:87.4px;height:8.3px;background:#eda25c;"></div>
<div class="t" style="left:252.65px;top:384.2px;color:#5a3a1a;">roblox</div>
<div class="b" style="left:192.85px;top:391.6px;width:41.4px;height:8.3px;background:#55d455;"></div>
<div class="t" style="left:215.85px;top:392.5px;color:#1a4a1a;">PUBG</div>
<div class="b" style="left:192.85px;top:399.9px;width:36.8px;height:8.3px;background:#62a4dc;"></div>
<div class="t" style="left:192.85px;top:400.8px;color:#1a2a4a;">Fortnite</div>
<div class="b" style="left:192.85px;top:408.2px;width:32.2px;height:8.3px;background:#a684d4;"></div>
<div class="t" style="left:202.05px;top:409.1px;color:#2a1a4a;">GTA V</div>
<div class="t" style="left:243.45px;top:409.1px;color:#44c83a;">fortnite pubg, pubg, pubg</div>
<div class="b" style="left:192.85px;top:416.5px;width:18.4px;height:8.3px;background:#4030c8;"></div>
<div class="t" style="left:192.85px;top:417.4px;color:#e8e8ff;">GTA4</div>
<div class="t" style="left:192.85px;top:434.0px;color:#3a3ae0;">Best Admins:</div>
<svg class="b" style="left:59.8px;top:414.6px" width="9" height="10.1" viewBox="0 0 8 9"><ellipse cx="4" cy="4" rx="3.3" ry="3.4" fill="#e6def3"/><rect x="2.3" y="6" width="3.6" height="1.8" fill="#e8e0f0"/><ellipse cx="2.7" cy="4.6" rx="1" ry="1.1" fill="#222"/><ellipse cx="5.3" cy="4.6" rx="1" ry="1.1" fill="#222"/></svg>
<div class="b" style="left:238.85px;top:159.2px;width:4.6px;height:8.3px;background:#e9b91a;"></div>
<div class="b" style="left:220.45px;top:175.8px;width:4.6px;height:8.3px;background:#2a22f2;"></div>
<div class="b" style="left:229.65px;top:192.4px;width:4.6px;height:8.3px;background:#2a22f2;"></div>
<div class="b" style="left:271.05px;top:200.7px;width:4.6px;height:8.3px;background:#e81313;"></div>
<div class="b" style="left:248.05px;top:217.3px;width:4.6px;height:8.3px;background:#e9b91a;"></div>
<div class="b" style="left:160.65px;top:233.9px;width:4.6px;height:8.3px;background:#2a22f2;"></div>
<div class="b" style="left:211.25px;top:233.9px;width:4.6px;height:8.3px;background:#e9b91a;"></div>
<div class="b" style="left:280.25px;top:233.9px;width:4.6px;height:8.3px;background:#e9b91a;"></div>
<div class="b" style="left:202.05px;top:258.8px;width:4.6px;height:8.3px;background:#2a22f2;"></div>
<div class="b" style="left:284.85px;top:267.1px;width:4.6px;height:8.3px;background:#e9b91a;"></div>
<div class="b" style="left:179.05px;top:283.7px;width:4.6px;height:8.3px;background:#2a22f2;"></div>
<div class="b" style="left:229.65px;top:283.7px;width:4.6px;height:8.3px;background:#2a22f2;"></div>
</div>
<div class="b" style="left:0;top:0;width:1px;height:437px;background:rgba(120,120,120,.45);z-index:9"></div>
<div id="div"></div>
<div class="b" style="left:390.8px;top:58.900000000000006px;width:223.2px;height:134.79999999999998px;background:#c0c0c0"></div>
<div class="s" style="left:393.4px;top:62.2px;line-height:12px;font-size:9.4px;font-family:'Liberation Serif';color:#14148a;text-decoration:underline">Active Time Machine ▲</div>
<div class="btn" style="left:465.9px;top:73.7px;width:23.3px;height:9.5px;line-height:9.5px"><b>-</b>1 min</div>
<div class="btn" style="left:492.4px;top:73.7px;width:25.1px;height:9.5px;line-height:9.5px">+1 min</div>
<div class="s" style="left:520.8px;top:72.5px;line-height:12px;font-size:9.4px;font-family:'Liberation Serif';color:#111;">(1/2)</div>
<div class="btn" style="left:459.8px;top:85.0px;width:28.5px;height:9.5px;line-height:9.5px"><b>-</b>10 min</div>
<div class="btn" style="left:490.9px;top:85.0px;width:29.9px;height:9.5px;line-height:9.5px">+10 min</div>
<div class="s" style="left:524.3px;top:83.8px;line-height:12px;font-size:9.4px;font-family:'Liberation Serif';color:#111;">(q/w)</div>
<div class="btn" style="left:471.8px;top:96.3px;width:17.1px;height:9.5px;line-height:9.5px"><b>-</b>1 hr</div>
<div class="btn" style="left:492.9px;top:96.3px;width:19.2px;height:9.5px;line-height:9.5px">+1 hr</div>
<div class="s" style="left:515.5px;top:95.1px;line-height:12px;font-size:9.4px;font-family:'Liberation Serif';color:#111;">(a/s)</div>
<div class="btn" style="left:465.7px;top:107.6px;width:23.2px;height:9.5px;line-height:9.5px"><b>-</b>1 day</div>
<div class="btn" style="left:492.5px;top:107.6px;width:25.3px;height:9.5px;line-height:9.5px">+1 day</div>
<div class="s" style="left:521.1px;top:106.4px;line-height:12px;font-size:9.4px;font-family:'Liberation Serif';color:#111;">(z/x)</div>
<div class="btn" style="left:459.8px;top:118.9px;width:30.7px;height:9.5px;line-height:9.5px"><b>-</b>10 days</div>
<div class="btn" style="left:494.8px;top:118.9px;width:33.2px;height:9.5px;line-height:9.5px">+10 days</div>
<div class="s" style="left:531.2px;top:117.7px;line-height:12px;font-size:9.4px;font-family:'Liberation Serif';color:#111;">(,/.)</div>
<div class="s" style="left:393.6px;top:129.2px;line-height:12px;font-size:9.4px;font-family:'Liberation Serif';color:#111;">Set Date:</div>
<div class="inp" style="left:430.7px;top:129.8px;width:51.6px;height:10.0px;line-height:10.0px">&#8201;August<svg style="position:absolute;right:2.2px;top:3.2px" width="5.4" height="3.6" viewBox="0 0 5.4 3.6"><path d="M0.5 0.6 L2.7 2.9 L4.9 0.6" fill="none" stroke="#222" stroke-width="1"/></svg></div>
<div class="inp" style="left:485.4px;top:129.8px;width:19.5px;height:10.0px;line-height:10.0px">28</div>
<div class="s" style="left:506px;top:129.5px;line-height:12px;font-size:9.4px;font-family:'Liberation Serif';color:#111;">,</div>
<div class="inp" style="left:510.6px;top:129.8px;width:31.0px;height:10.0px;line-height:10.0px">2025</div>
<div class="inp" style="left:545px;top:129.8px;width:19.3px;height:10.0px;line-height:10.0px">08</div>
<div class="s" style="left:565.3px;top:128.7px;line-height:12px;font-size:9.4px;font-family:'Liberation Serif';color:#111;">:</div>
<div class="inp" style="left:568.6px;top:129.8px;width:18.6px;height:10.0px;line-height:10.0px">14</div>
<div class="s" style="left:587.9px;top:128.7px;line-height:12px;font-size:9.4px;font-family:'Liberation Serif';color:#111;">:</div>
<div class="inp" style="left:590.8px;top:129.8px;width:19.4px;height:10.0px;line-height:10.0px">31</div>
<div class="inp ta" style="left:393.4px;top:141.3px;width:97.0px;height:17.899999999999977px">1756383271201<svg style="position:absolute;right:0.5px;bottom:0.5px" width="5" height="5" viewBox="0 0 5 5"><path d="M0.5 4.8 L4.8 0.5 M2.7 4.8 L4.8 2.7" stroke="#888" stroke-width="0.6"/></svg></div>
<div class="btn" style="left:493.3px;top:151.5px;width:47.3px;height:10.6px;line-height:10.6px">Copy Date</div>
<div class="btn" style="left:393.4px;top:163.1px;width:57.8px;height:9.9px;line-height:9.9px">Summary Mode</div>
<svg class="b" style="left:453.7px;top:163px" width="7.7" height="7.7" viewBox="0 0 10 10"><rect width="10" height="10" rx="1.5" fill="#e263a6"/><path d="M2 5.2 L4.2 7.5 L8.2 2.3" fill="none" stroke="#3a1a30" stroke-width="1.6"/></svg>
<div class="s" style="left:463.9px;top:161.6px;line-height:12px;font-size:9.4px;font-family:'Liberation Serif';color:#111;">Pos Mirroring</div>
<div class="btn" style="left:393.4px;top:174.6px;width:88.7px;height:16.4px;line-height:16.4px">Set</div>
<div class="b" style="left:0;top:0;width:159.5px;height:30.5px;background:#e6e6fa"></div>
<div class="b" style="left:2px;top:12.7px;width:155.9px;height:14.2px;background:#f4c3c3"></div>
<div class="b" style="left:28px;top:1.7000000000000002px;width:26.6px;height:9.900000000000002px;background:#a9a9a9"></div>
<div class="s" style="left:2.4px;top:0.6px;line-height:12px;font-size:9.35px;font-family:'Liberation Sans';color:#222;">Tiled |Links |</div>
<svg class="b" style="left:73.3px;top:2.5px" width="7.2" height="7.2" viewBox="0 0 10 10"><rect width="10" height="10" rx="1.5" fill="#e263a6"/><path d="M2 5.2 L4.2 7.5 L8.2 2.3" fill="none" stroke="#3a1a30" stroke-width="1.6"/></svg>
<div class="s" style="left:83.2px;top:1.75px;line-height:12px;font-size:9.4px;font-family:'Liberation Serif';color:#1a1a1a;">Preview</div>
<div class="s" style="left:116.4px;top:0.4px;line-height:12px;font-size:9.3px;font-family:'Liberation Sans';color:#556;">|</div>
<div class="btn" style="left:120.8px;top:1.6px;width:36.8px;height:10.7px;line-height:10.7px"><span style="position:relative;top:.9px">View here</span></div>
<svg class="b" style="left:3.5px;top:14.7px" width="8" height="8" viewBox="0 0 8 8"><circle cx="4" cy="4" r="3.3" fill="#e9a8d0" stroke="#5a2a50" stroke-width="0.8"/><circle cx="4" cy="4" r="2.3" fill="none" stroke="#cc55a4" stroke-width="1.3"/></svg>
<div class="s" style="left:14.9px;top:13.0px;line-height:12px;font-size:9.3px;font-family:'Liberation Sans';color:#222;">Current |</div>
<div class="inp" style="left:54px;top:14.8px;width:102.4px;height:10.099999999999998px;line-height:9.2px">1756383271201</div>
</div>
</body></html>
